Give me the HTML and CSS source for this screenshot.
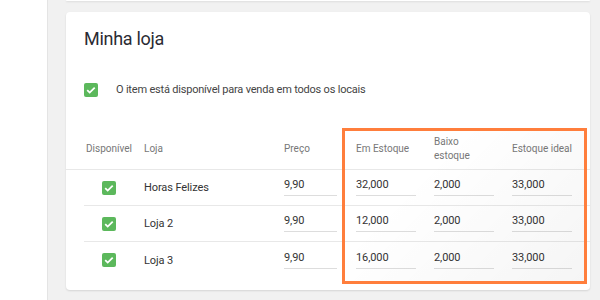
FILE: index.html
```html
<!DOCTYPE html>
<html lang="pt-BR">
<head>
  <meta charset="UTF-8" />
  <title>Minha loja</title>
  <link rel="stylesheet" href="styles.css">
</head>
<body>
  <div class="sidebar"></div>
  <main class="content">
    <div class="card card-prev"></div>

    <section class="card">
      <h2 class="card-title">Minha loja</h2>

      <label class="all-stores">
        <span class="check"></span>
        <span>O item está disponível para venda em todos os locais</span>
      </label>

      <div class="stock-table">
        <div class="row head">
          <div class="cell center">Disponível</div>
          <div class="cell name">Loja</div>
          <div class="cell">Preço</div>
          <div class="cell">Em Estoque</div>
          <div class="cell">Baixo<br>estoque</div>
          <div class="cell">Estoque ideal</div>
        </div>
        <div id="rows"></div>

        <div class="highlight"></div>
      </div>
    </section>
  </main>

  <script>
    const stores = [
      { name: 'Horas Felizes', price: '9,90', stock: '32,000', low: '2,000', ideal: '33,000' },
      { name: 'Loja 2', price: '9,90', stock: '12,000', low: '2,000', ideal: '33,000' },
      { name: 'Loja 3', price: '9,90', stock: '16,000', low: '2,000', ideal: '33,000' }
    ];

    const rowsDiv = document.getElementById('rows');
    for (const s of stores) {
      const row = document.createElement('div');
      row.className = 'row';
      row.innerHTML = `
        <div class="cell center"><span class="check"></span></div>
        <div class="cell name">${s.name}</div>
        <div class="cell"><input class="field price" value="${s.price}"></div>
        <div class="cell"><input class="field" value="${s.stock}"></div>
        <div class="cell"><input class="field" value="${s.low}"></div>
        <div class="cell"><input class="field" value="${s.ideal}"></div>`;
      rowsDiv.appendChild(row);
    }
  </script>
</body>
</html>
```

FILE: styles.css
```css
* {
  box-sizing: border-box;
}

body {
  margin: 0;
  height: 300px;
  overflow: hidden;
  display: flex;
  background: #f1f1f1;
  font-family: 'Roboto', 'Liberation Sans', sans-serif;
  color: #333;
}

.sidebar {
  width: 48px;
  background: #fff;
  border-right: 1px solid #e4e4e4;
}

.content {
  flex: 1;
  padding: 0 10px 0 18px;
}

.card {
  background: #fff;
  border-radius: 4px;
  box-shadow: 0 1px 2px rgba(0,0,0,0.12);
}

.card-prev {
  height: 1px;
  border-radius: 0 0 4px 4px;
  margin-bottom: 11px;
}

.card-title {
  margin: 0;
  padding: 15px 18px 0;
  font-size: 18px;
  letter-spacing: -0.3px;
  line-height: 24px;
  font-weight: 400;
  color: #2b2b33;
}

.all-stores {
  display: flex;
  align-items: center;
  gap: 18px;
  margin: 32px 18px 0;
  font-size: 11px;
  letter-spacing: -0.2px;
  line-height: 14px;
  color: #444;
}

.check {
  display: inline-block;
  width: 14px;
  height: 14px;
  border-radius: 2px;
  background: #5cb85c url("data:image/svg+xml,%3Csvg xmlns='http://www.w3.org/2000/svg' viewBox='0 0 14 14'%3E%3Cpath d='M3.2 7.2l2.5 2.4 5-5' fill='none' stroke='%23fff' stroke-width='1.8'/%3E%3C/svg%3E") center / 14px no-repeat;
}

.stock-table {
  position: relative;
  margin-top: 31px;
  padding-bottom: 12px;
}

.row {
  display: grid;
  grid-template-columns: 50px 150px 72px 78px 78px 1fr;
  align-items: center;
  height: 36px;
  margin-left: 18px;
  border-bottom: 1px solid #e8e8e8;
  font-size: 11px;
  letter-spacing: -0.1px;
}

.row:last-child {
  border-bottom: none;
}

.row.head {
  height: 42px;
  margin-left: 0;
  padding-left: 18px;
  font-size: 10px;
  letter-spacing: 0;
  line-height: 14px;
  color: #777;
}

.cell.center {
  text-align: center;
  display: flex;
  justify-content: center;
}

.cell.name {
  padding-left: 10px;
}

.field {
  width: 60px;
  height: 22px;
  margin-bottom: 5px;
  padding: 0;
  border: none;
  border-bottom: 1px solid #ddd;
  font-family: inherit;
  font-size: 11px;
  letter-spacing: -0.1px;
  color: #333;
  background: transparent;
  outline: none;
}

.field.price {
  width: 53px;
}

/* annotation box */
.highlight {
  position: absolute;
  left: 276px;
  top: 0;
  width: 245px;
  height: 156px;
  border: 3px solid #ff7e3c;
  background: linear-gradient(135deg, rgba(0,0,0,0) 30%, rgba(0,0,0,0.04));
  pointer-events: none;
}
```
